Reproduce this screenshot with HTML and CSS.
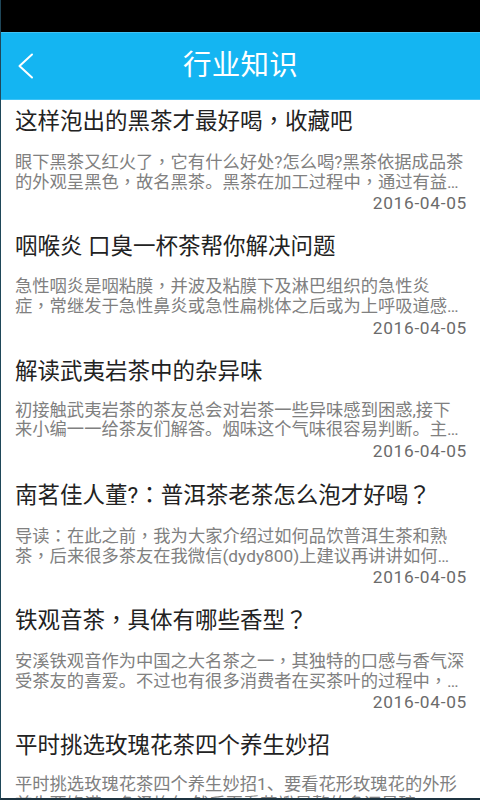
FILE: index.html
```html
<!DOCTYPE html>
<html lang="zh-CN">
<head>
<meta charset="utf-8">
<title>行业知识</title>
<link rel="stylesheet" href="styles.css">
</head>
<body>
<div class="frame">
  <div class="statusbar"></div>
  <header class="header">
    <div class="back">
      <svg width="18" height="26" viewBox="0 0 18 26" aria-hidden="true"><path d="M15 1.5 L2.5 13 L15 24.5" fill="none" stroke="#fff" stroke-width="2" stroke-linecap="round" stroke-linejoin="round"/></svg>
    </div>
    <h1 class="title">行业知识</h1>
    <div></div>
  </header>
  <ul class="list">
    <li class="item">
      <h2 class="item-title">这样泡出的黑茶才最好喝<span class="fw" lang="zh-TW">，</span>收藏吧</h2>
      <p class="desc"><span class="line">眼下黑茶又红火了<span class="fw" lang="zh-TW">，</span>它有什么好处?怎么喝?黑茶依据成品茶</span><span class="line">的外观呈黑色<span class="fw" lang="zh-TW">，</span>故名黑茶。黑茶在加工过程中<span class="fw" lang="zh-TW">，</span>通过有益…</span></p>
      <div class="date">2016-04-05</div>
    </li>
    <li class="item">
      <h2 class="item-title">咽喉炎 口臭一杯茶帮你解决问题</h2>
      <p class="desc"><span class="line">急性咽炎是咽粘膜<span class="fw" lang="zh-TW">，</span>并波及粘膜下及淋巴组织的急性炎</span><span class="line">症<span class="fw" lang="zh-TW">，</span>常继发于急性鼻炎或急性扁桃体之后或为上呼吸道感…</span></p>
      <div class="date">2016-04-05</div>
    </li>
    <li class="item">
      <h2 class="item-title">解读武夷岩茶中的杂异味</h2>
      <p class="desc"><span class="line">初接触武夷岩茶的茶友总会对岩茶一些异味感到困惑,接下</span><span class="line">来小编一一给茶友们解答。烟味这个气味很容易判断。主…</span></p>
      <div class="date">2016-04-05</div>
    </li>
    <li class="item">
      <h2 class="item-title">南茗佳人董?<span class="fw" lang="zh-TW">：</span>普洱茶老茶怎么泡才好喝<span class="fw" lang="zh-TW">？</span></h2>
      <p class="desc"><span class="line">导读<span class="fw" lang="zh-TW">：</span>在此之前<span class="fw" lang="zh-TW">，</span>我为大家介绍过如何品饮普洱生茶和熟</span><span class="line">茶<span class="fw" lang="zh-TW">，</span>后来很多茶友在我微信(dydy800)上建议再讲讲如何…</span></p>
      <div class="date">2016-04-05</div>
    </li>
    <li class="item">
      <h2 class="item-title">铁观音茶<span class="fw" lang="zh-TW">，</span>具体有哪些香型<span class="fw" lang="zh-TW">？</span></h2>
      <p class="desc"><span class="line">安溪铁观音作为中国之大名茶之一<span class="fw" lang="zh-TW">，</span>其独特的口感与香气深</span><span class="line">受茶友的喜爱。不过也有很多消费者在买茶叶的过程中<span class="fw" lang="zh-TW">，</span>…</span></p>
      <div class="date">2016-04-05</div>
    </li>
    <li class="item">
      <h2 class="item-title">平时挑选玫瑰花茶四个养生妙招</h2>
      <p class="desc"><span class="line">平时挑选玫瑰花茶四个养生妙招1、要看花形玫瑰花的外形</span><span class="line">首先要饱满<span class="fw" lang="zh-TW">，</span>色泽均匀,然后再看花瓣是整的多还是碎…</span></p>
      <div class="date">2016-04-05</div>
    </li>
  </ul>
</div>
</body>
</html>
```

FILE: styles.css
```css
* { box-sizing: border-box; }
html, body {
  margin: 0;
  padding: 0;
  width: 480px;
  height: 800px;
  overflow: hidden;
  background: #fff;
}
body {
  font-family: Roboto, "Noto Sans CJK SC", "Noto Sans", sans-serif;
  text-spacing-trim: space-all;
}
.fw {
  font-family: "Noto Sans CJK TC", "Noto Sans CJK SC", sans-serif;
  line-height: 1;
}
.frame {
  width: 480px;
  height: 800px;
  overflow: hidden;
  border-left: 1px solid #1f4759;
  border-bottom: 2px solid #1d3340;
  display: flex;
  flex-direction: column;
  background: #fff;
}
.statusbar {
  height: 32px;
  flex: none;
  background: #000;
}
.header {
  height: 68px;
  flex: none;
  background: #14b5f2;
  border-top: 1px solid #3fc3f6;
  border-bottom: 1px solid #3fc3f6;
  display: grid;
  grid-template-columns: 1fr auto 1fr;
  align-items: center;
}
.back {
  padding-left: 16px;
  display: flex;
  align-items: center;
}
.back svg { display: block; }
.title {
  margin: 0;
  color: #fff;
  font-size: 28.5px;
  font-weight: normal;
  line-height: 34px;
  letter-spacing: 0.3px;
}
.list {
  list-style: none;
  margin: 0;
  padding: 0;
}
.item {
  height: 124.8px;
  padding: 6px 13px 0 14px;
  display: flex;
  flex-direction: column;
}
.item-title {
  margin: 0;
  font-size: 22.5px;
  line-height: 30px;
  font-weight: normal;
  color: #222;
  white-space: nowrap;
}
.desc {
  margin: 15.5px 0 0;
  font-size: 17.3px;
  line-height: 19px;
  color: #808080;
}
.line {
  display: block;
  white-space: nowrap;
}
.date {
  margin-top: 2.5px;
  text-align: right;
  font-size: 17.3px;
  line-height: 19px;
  color: #6b6b6b;
  letter-spacing: 0.7px;
}
```
